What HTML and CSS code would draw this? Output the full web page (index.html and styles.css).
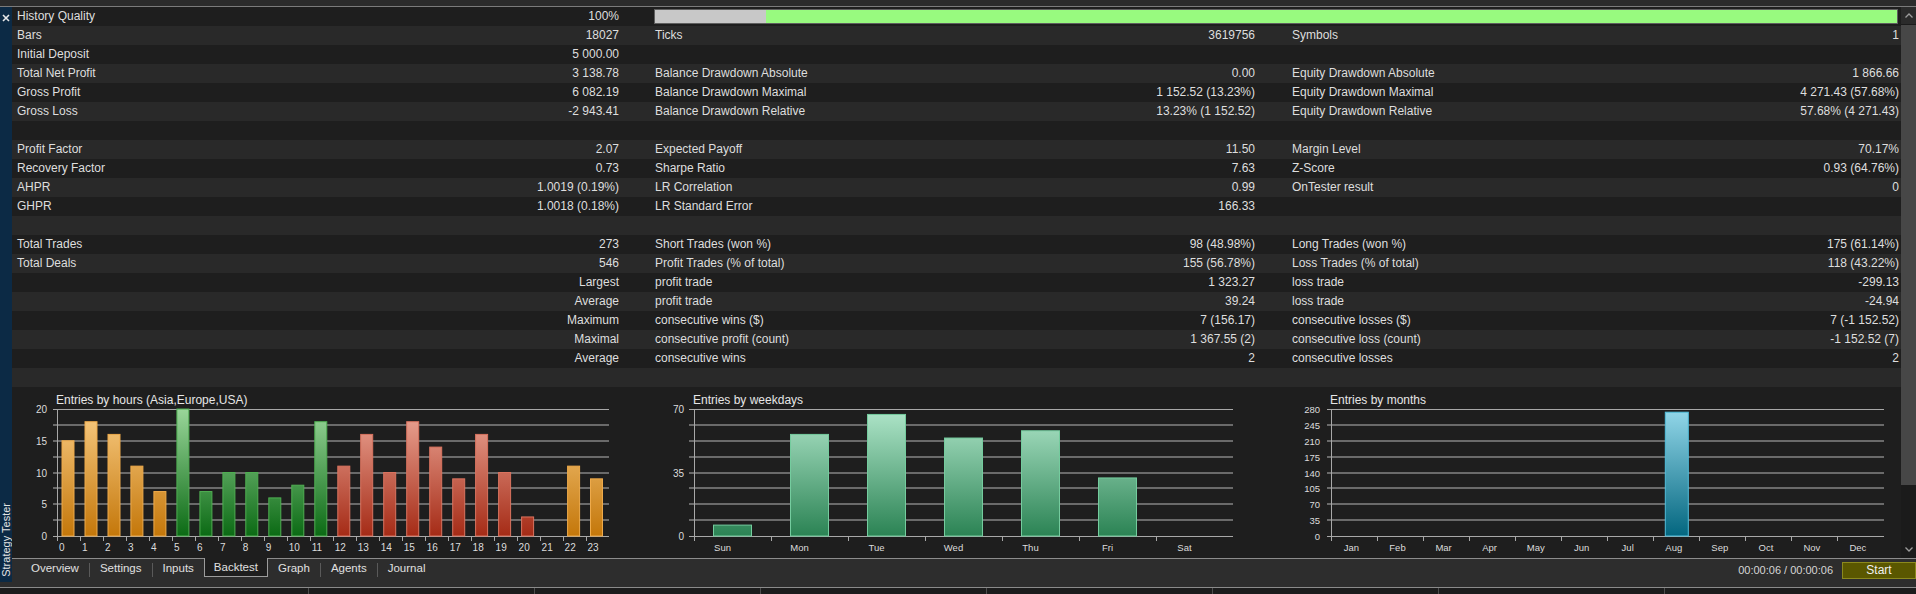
FILE: index.html
```html
<!DOCTYPE html>
<html>
<head>
<meta charset="utf-8">
<link rel="stylesheet" href="styles.css">
</head>
<body>
<div class="topstrip"></div>
<div class="win">
  <div class="sidebar">
    <svg class="close" width="8" height="8" viewBox="0 0 8 8"><path d="M1 1L7 7M7 1L1 7"/></svg>
    <div class="vtitle">Strategy Tester</div>
  </div>
  <div class="right">
    <div class="panel">
      <div class="scrollarea">
        <div class="table">
          <div class="row"><div class="l1">History Quality</div><div class="v1">100%</div><div class="qbar"><div class="qgray"></div><div class="qgreen"></div></div></div>
          <div class="row"><div class="l1">Bars</div><div class="v1">18027</div><div class="l2">Ticks</div><div class="v2">3619756</div><div class="l3">Symbols</div><div class="v3">1</div></div>
          <div class="row"><div class="l1">Initial Deposit</div><div class="v1">5 000.00</div></div>
          <div class="row"><div class="l1">Total Net Profit</div><div class="v1">3 138.78</div><div class="l2">Balance Drawdown Absolute</div><div class="v2">0.00</div><div class="l3">Equity Drawdown Absolute</div><div class="v3">1 866.66</div></div>
          <div class="row"><div class="l1">Gross Profit</div><div class="v1">6 082.19</div><div class="l2">Balance Drawdown Maximal</div><div class="v2">1 152.52 (13.23%)</div><div class="l3">Equity Drawdown Maximal</div><div class="v3">4 271.43 (57.68%)</div></div>
          <div class="row"><div class="l1">Gross Loss</div><div class="v1">-2 943.41</div><div class="l2">Balance Drawdown Relative</div><div class="v2">13.23% (1 152.52)</div><div class="l3">Equity Drawdown Relative</div><div class="v3">57.68% (4 271.43)</div></div>
          <div class="row"></div>
          <div class="row"><div class="l1">Profit Factor</div><div class="v1">2.07</div><div class="l2">Expected Payoff</div><div class="v2">11.50</div><div class="l3">Margin Level</div><div class="v3">70.17%</div></div>
          <div class="row"><div class="l1">Recovery Factor</div><div class="v1">0.73</div><div class="l2">Sharpe Ratio</div><div class="v2">7.63</div><div class="l3">Z-Score</div><div class="v3">0.93 (64.76%)</div></div>
          <div class="row"><div class="l1">AHPR</div><div class="v1">1.0019 (0.19%)</div><div class="l2">LR Correlation</div><div class="v2">0.99</div><div class="l3">OnTester result</div><div class="v3">0</div></div>
          <div class="row"><div class="l1">GHPR</div><div class="v1">1.0018 (0.18%)</div><div class="l2">LR Standard Error</div><div class="v2">166.33</div></div>
          <div class="row"></div>
          <div class="row"><div class="l1">Total Trades</div><div class="v1">273</div><div class="l2">Short Trades (won %)</div><div class="v2">98 (48.98%)</div><div class="l3">Long Trades (won %)</div><div class="v3">175 (61.14%)</div></div>
          <div class="row"><div class="l1">Total Deals</div><div class="v1">546</div><div class="l2">Profit Trades (% of total)</div><div class="v2">155 (56.78%)</div><div class="l3">Loss Trades (% of total)</div><div class="v3">118 (43.22%)</div></div>
          <div class="row"><div class="v1">Largest</div><div class="l2">profit trade</div><div class="v2">1 323.27</div><div class="l3">loss trade</div><div class="v3">-299.13</div></div>
          <div class="row"><div class="v1">Average</div><div class="l2">profit trade</div><div class="v2">39.24</div><div class="l3">loss trade</div><div class="v3">-24.94</div></div>
          <div class="row"><div class="v1">Maximum</div><div class="l2">consecutive wins ($)</div><div class="v2">7 (156.17)</div><div class="l3">consecutive losses ($)</div><div class="v3">7 (-1 152.52)</div></div>
          <div class="row"><div class="v1">Maximal</div><div class="l2">consecutive profit (count)</div><div class="v2">1 367.55 (2)</div><div class="l3">consecutive loss (count)</div><div class="v3">-1 152.52 (7)</div></div>
          <div class="row"><div class="v1">Average</div><div class="l2">consecutive wins</div><div class="v2">2</div><div class="l3">consecutive losses</div><div class="v3">2</div></div>
          <div class="row"></div>
        </div>
        <div class="charts">
          <svg class="chart" width="633" height="171" viewBox="0 0 633 171">
            <defs>
              <linearGradient id="gO" gradientUnits="userSpaceOnUse" x1="0" y1="22" x2="0" y2="149"><stop offset="0" stop-color="#f9cc84"/><stop offset="1" stop-color="#c4770a"/></linearGradient>
              <linearGradient id="gG" gradientUnits="userSpaceOnUse" x1="0" y1="22" x2="0" y2="149"><stop offset="0" stop-color="#9ad69a"/><stop offset="1" stop-color="#0b6a14"/></linearGradient>
              <linearGradient id="gR" gradientUnits="userSpaceOnUse" x1="0" y1="22" x2="0" y2="149"><stop offset="0" stop-color="#eda898"/><stop offset="1" stop-color="#a52b16"/></linearGradient>
            </defs>
            <text class="ttl" x="44" y="17">Entries by hours (Asia,Europe,USA)</text>
            <path class="grid" d="M40.5 38H597M40.5 54H597M40.5 70H597M40.5 86H597M40.5 101H597M40.5 117H597M40.5 133H597"/>
            <path class="gridhi" d="M40.5 22H597M40.5 149H597"/>
            <path class="axis" d="M45.5 22V154M68.5 149V154M91.5 149V154M114.4 149V154M137.4 149V154M160.4 149V154M183.4 149V154M206.4 149V154M229.3 149V154M252.3 149V154M275.3 149V154M298.3 149V154M321.3 149V154M344.2 149V154M367.2 149V154M390.2 149V154M413.2 149V154M436.2 149V154M459.1 149V154M482.1 149V154M505.1 149V154M528.1 149V154M551.1 149V154M574 149V154"/>
            <rect class="bo" x="50" y="53.75" width="12" height="95.25"/>
            <rect class="bo" x="73" y="34.7" width="12" height="114.3"/>
            <rect class="bo" x="96" y="47.4" width="12" height="101.6"/>
            <rect class="bo" x="118.9" y="79.15" width="12" height="69.85"/>
            <rect class="bo" x="141.9" y="104.55" width="12" height="44.45"/>
            <rect class="bg" x="164.9" y="22" width="12" height="127"/>
            <rect class="bg" x="187.9" y="104.55" width="12" height="44.45"/>
            <rect class="bg" x="210.9" y="85.5" width="12" height="63.5"/>
            <rect class="bg" x="233.8" y="85.5" width="12" height="63.5"/>
            <rect class="bg" x="256.8" y="110.9" width="12" height="38.1"/>
            <rect class="bg" x="279.8" y="98.2" width="12" height="50.8"/>
            <rect class="bg" x="302.8" y="34.7" width="12" height="114.3"/>
            <rect class="br" x="325.8" y="79.15" width="12" height="69.85"/>
            <rect class="br" x="348.7" y="47.4" width="12" height="101.6"/>
            <rect class="br" x="371.7" y="85.5" width="12" height="63.5"/>
            <rect class="br" x="394.7" y="34.7" width="12" height="114.3"/>
            <rect class="br" x="417.7" y="60.1" width="12" height="88.9"/>
            <rect class="br" x="440.7" y="91.85" width="12" height="57.15"/>
            <rect class="br" x="463.6" y="47.4" width="12" height="101.6"/>
            <rect class="br" x="486.6" y="85.5" width="12" height="63.5"/>
            <rect class="br" x="509.6" y="129.95" width="12" height="19.05"/>
            <rect class="bo" x="555.6" y="79.15" width="12" height="69.85"/>
            <rect class="bo" x="578.5" y="91.85" width="12" height="57.15"/>
            <g class="yl">
              <text x="35" y="25.5">20</text><text x="35" y="57.5">15</text><text x="35" y="89.5">10</text><text x="35" y="121">5</text><text x="35" y="152.5">0</text>
            </g>
            <g class="xl">
              <text x="47" y="164">0</text><text x="70" y="164">1</text><text x="93" y="164">2</text><text x="115.9" y="164">3</text><text x="138.9" y="164">4</text><text x="161.9" y="164">5</text><text x="184.9" y="164">6</text><text x="207.9" y="164">7</text><text x="230.8" y="164">8</text><text x="253.8" y="164">9</text><text x="276.8" y="164">10</text><text x="299.8" y="164">11</text><text x="322.8" y="164">12</text><text x="345.7" y="164">13</text><text x="368.7" y="164">14</text><text x="391.7" y="164">15</text><text x="414.7" y="164">16</text><text x="437.7" y="164">17</text><text x="460.6" y="164">18</text><text x="483.6" y="164">19</text><text x="506.6" y="164">20</text><text x="529.6" y="164">21</text><text x="552.6" y="164">22</text><text x="575.5" y="164">23</text>
            </g>
          </svg>
          <svg class="chart" width="631" height="171" viewBox="0 0 631 171">
            <defs>
              <linearGradient id="gW" gradientUnits="userSpaceOnUse" x1="0" y1="22" x2="0" y2="149"><stop offset="0" stop-color="#b0e6ca"/><stop offset="1" stop-color="#2b8354"/></linearGradient>
            </defs>
            <text class="ttl" x="48" y="17">Entries by weekdays</text>
            <path class="grid" d="M44 38H588M44 54H588M44 70H588M44 86H588M44 101H588M44 117H588M44 133H588"/>
            <path class="gridhi" d="M44 22H588M44 149H588"/>
            <path class="axis" d="M49 22V154M126 149V154M203 149V154M280 149V154M357 149V154M434 149V154M511 149V154"/>
            <rect class="bw" x="68.5" y="138.1" width="38" height="10.9"/>
            <rect class="bw" x="145.5" y="47.4" width="38" height="101.6"/>
            <rect class="bw" x="222.5" y="27.44" width="38" height="121.56"/>
            <rect class="bw" x="299.5" y="51.03" width="38" height="97.97"/>
            <rect class="bw" x="376.5" y="43.77" width="38" height="105.23"/>
            <rect class="bw" x="453.5" y="90.94" width="38" height="58.06"/>
            <g class="yl">
              <text x="39" y="25.5">70</text><text x="39" y="89.5">35</text><text x="39" y="152.5">0</text>
            </g>
            <g class="xl xm">
              <text x="77.5" y="164">Sun</text><text x="154.5" y="164">Mon</text><text x="231.5" y="164">Tue</text><text x="308.5" y="164">Wed</text><text x="385.5" y="164">Thu</text><text x="462.5" y="164">Fri</text><text x="539.5" y="164">Sat</text>
            </g>
          </svg>
          <svg class="chart" width="625" height="171" viewBox="0 0 625 171">
            <defs>
              <linearGradient id="gM" gradientUnits="userSpaceOnUse" x1="0" y1="22" x2="0" y2="149"><stop offset="0" stop-color="#94d8ea"/><stop offset="1" stop-color="#03667f"/></linearGradient>
            </defs>
            <text class="ttl" x="54" y="17">Entries by months</text>
            <path class="grid" d="M50.5 38H608M50.5 54H608M50.5 70H608M50.5 86H608M50.5 101H608M50.5 117H608M50.5 133H608"/>
            <path class="gridhi" d="M50.5 22H608M50.5 149H608"/>
            <path class="axis" d="M55.5 22V154M101.5 149V154M147.6 149V154M193.6 149V154M239.7 149V154M285.7 149V154M331.7 149V154M377.8 149V154M423.8 149V154M469.9 149V154M515.9 149V154M561.9 149V154"/>
            <rect class="bm" x="389.3" y="25.2" width="23" height="123.8"/>
            <g class="yl ys">
              <text x="44" y="25.5">280</text><text x="44" y="41.5">245</text><text x="44" y="57.5">210</text><text x="44" y="73.5">175</text><text x="44" y="89.5">140</text><text x="44" y="104.5">105</text><text x="44" y="120.5">70</text><text x="44" y="136.5">35</text><text x="44" y="152.5">0</text>
            </g>
            <g class="xl xm">
              <text x="75.5" y="164">Jan</text><text x="121.5" y="164">Feb</text><text x="167.6" y="164">Mar</text><text x="213.6" y="164">Apr</text><text x="259.7" y="164">May</text><text x="305.7" y="164">Jun</text><text x="351.7" y="164">Jul</text><text x="397.8" y="164">Aug</text><text x="443.8" y="164">Sep</text><text x="489.9" y="164">Oct</text><text x="535.9" y="164">Nov</text><text x="581.9" y="164">Dec</text>
            </g>
          </svg>
        </div>
      </div>
      <div class="scrollbar">
        <div class="sb-btn sb-up"><svg width="8" height="5" viewBox="0 0 8 5"><path d="M0.5 4.5L4 1L7.5 4.5"/></svg></div>
        <div class="sb-thumb"></div>
        <div class="sb-btn sb-down"><svg width="8" height="5" viewBox="0 0 8 5"><path d="M0.5 0.5L4 4L7.5 0.5"/></svg></div>
      </div>
    </div>
    <div class="tabbar">
      <div class="tab">Overview</div><div class="sep"></div>
      <div class="tab">Settings</div><div class="sep"></div>
      <div class="tab">Inputs</div>
      <div class="tab active">Backtest</div>
      <div class="tab">Graph</div><div class="sep"></div>
      <div class="tab">Agents</div><div class="sep"></div>
      <div class="tab">Journal</div>
      <div class="time">00:00:06 / 00:00:06</div>
      <div class="start">Start</div>
    </div>
  </div>
</div>
<div class="status">
  <div class="cell first"></div><div class="cell"></div><div class="cell"></div><div class="cell"></div><div class="cell"></div><div class="cell"></div><div class="cell"></div>
</div>
</body>
</html>
```

FILE: styles.css
```css
html, body {
  margin: 0;
  padding: 0;
}
body {
  width: 1916px;
  height: 594px;
  overflow: hidden;
  background: #2d2d2d;
  font-family: "Liberation Sans", Arial, sans-serif;
  font-size: 12px;
  color: #dedede;
}
.topstrip {
  height: 6px;
  background: #2b2b2b;
  border-bottom: 1px solid #7b7b7b;
}
.win {
  display: flex;
  height: 580px;
}
.sidebar {
  width: 12px;
  height: 575px;
  flex: none;
  background: #0c2a45;
  display: flex;
  flex-direction: column;
  align-items: center;
  justify-content: space-between;
}
.close {
  margin-top: 7px;
  display: block;
}
.close path {
  stroke: #e8e8e8;
  stroke-width: 1.6;
  fill: none;
}
.vtitle {
  writing-mode: vertical-rl;
  transform: rotate(180deg);
  font-size: 11px;
  line-height: 12px;
  color: #e4e4e4;
  margin-bottom: 5px;
  white-space: nowrap;
}
.right {
  width: 1904px;
  display: flex;
  flex-direction: column;
}
.panel {
  height: 551px;
  display: flex;
}
.scrollarea {
  width: 1889px;
  display: flex;
  flex-direction: column;
}
.row {
  display: grid;
  grid-template-columns: 308px 302px 333px 303px 322px 321px;
  height: 19px;
  line-height: 19px;
  align-items: center;
  white-space: nowrap;
  background: #292929;
}
.row:nth-child(odd) {
  background: #1e1e1e;
}
.l1 { grid-column: 1; padding-left: 5px; }
.v1 { grid-column: 2; text-align: right; padding-right: 3px; }
.l2 { grid-column: 3; padding-left: 33px; }
.v2 { grid-column: 4; text-align: right; padding-right: 3px; }
.l3 { grid-column: 5; padding-left: 34px; }
.v3 { grid-column: 6; text-align: right; padding-right: 2px; }
.qbar {
  grid-column: 3 / 7;
  margin: 0 3px 0 32px;
  height: 15px;
  box-sizing: border-box;
  border: 1px solid #5f5f5f;
  display: flex;
}
.qgray {
  width: 111px;
  background: #c8c8c8;
}
.qgreen {
  flex: 1;
  background: #98fa7f;
}
.charts {
  height: 171px;
  background: #1e1e1e;
  display: flex;
}
.chart {
  display: block;
  flex: none;
}
.chart text {
  font-family: "Liberation Sans", Arial, sans-serif;
  fill: #dcdcdc;
}
.chart .ttl {
  font-size: 12px;
  fill: #e6e6e6;
}
.yl text {
  font-size: 10px;
  text-anchor: end;
}
.ys text {
  font-size: 9.5px;
}
.xl text {
  font-size: 10px;
}
.xm text {
  font-size: 9.5px;
  text-anchor: middle;
}
.grid {
  stroke: #6a6a6a;
  stroke-width: 1.5;
  fill: none;
  shape-rendering: crispEdges;
}
.gridhi {
  stroke: #a8a8a8;
  stroke-width: 1;
  fill: none;
  shape-rendering: crispEdges;
}
.axis {
  stroke: #a8a8a8;
  stroke-width: 1;
  fill: none;
  shape-rendering: crispEdges;
}
.bo { fill: url(#gO); stroke: #eeaa4a; stroke-width: 1; }
.bg { fill: url(#gG); stroke: #4fae52; stroke-width: 1; }
.br { fill: url(#gR); stroke: #d9735f; stroke-width: 1; }
.bw { fill: url(#gW); stroke: #74cc9e; stroke-width: 1; }
.bm { fill: url(#gM); stroke: #51bfdc; stroke-width: 1; }
.scrollbar {
  width: 15px;
  background: #1b1b1b;
  display: flex;
  flex-direction: column;
}
.sb-btn {
  height: 17px;
  display: flex;
  align-items: center;
  justify-content: center;
}
.sb-btn svg {
  display: block;
}
.sb-btn path {
  stroke: #9c9c9c;
  stroke-width: 1.3;
  fill: none;
}
.sb-up {
  background: #2b2b2b;
}
.sb-thumb {
  height: 460px;
  margin-top: 1px;
  background: #474747;
}
.sb-down {
  margin-top: auto;
}
.tabbar {
  height: 29px;
  box-sizing: border-box;
  border-top: 1px solid #8c8c8c;
  background: #2d2d2d;
  display: flex;
  align-items: flex-start;
  padding-left: 9px;
  white-space: nowrap;
}
.tab {
  height: 18px;
  line-height: 18px;
  padding: 0 10px;
  font-size: 11.5px;
  color: #e0e0e0;
}
.tab.active {
  margin-top: -1px;
  height: 19px;
  box-sizing: border-box;
  line-height: 19px;
  padding: 0 9px;
  border: 1px solid #9c9c9c;
  border-top: none;
  background: #1e1e1e;
}
.sep {
  width: 1px;
  height: 14px;
  margin-top: 4px;
  background: #5a5a5a;
}
.time {
  margin-left: auto;
  margin-top: 3px;
  margin-right: 9px;
  font-size: 11px;
  line-height: 17px;
  color: #d6d6d6;
}
.start {
  width: 74px;
  height: 17px;
  margin-top: 3px;
  box-sizing: border-box;
  background: #5a5700;
  border: 1px solid #8b891d;
  color: #f0f0f0;
  text-align: center;
  line-height: 15px;
  font-size: 12px;
}
.status {
  height: 7px;
  box-sizing: border-box;
  border-top: 1px solid #8a8a8a;
  background: #1c1c1c;
  display: flex;
}
.cell {
  flex: none;
  width: 226px;
  box-sizing: border-box;
  border-right: 1px solid #4d4d4d;
}
.cell.first {
  width: 309px;
}
```
